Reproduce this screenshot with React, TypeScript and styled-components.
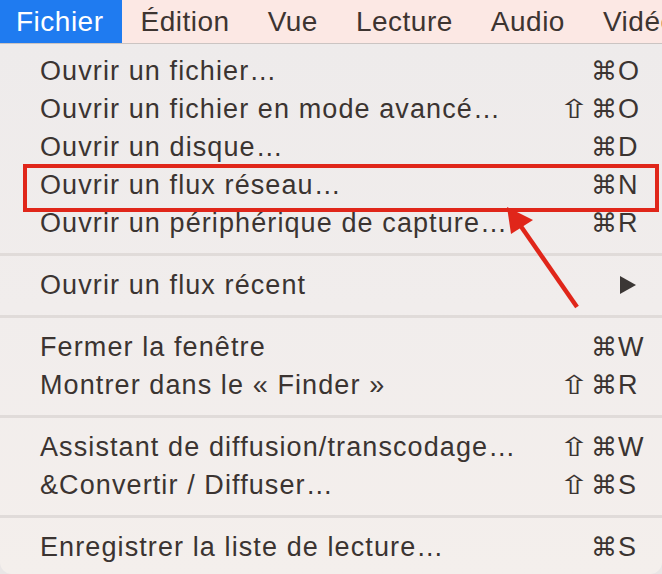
import React from "react";
import styled, { createGlobalStyle, css } from "styled-components";

const Global = createGlobalStyle`
  html, body { margin: 0; padding: 0; background: #e9e6e6; }
  body { width: 662px; height: 574px; overflow: hidden; }
  * { box-sizing: border-box; }
`;

const Screen = styled.div`
  position: relative;
  width: 662px;
  height: 574px;
  overflow: hidden;
  font-family: "Liberation Sans", Arial, sans-serif;
  color: #3b3431;
`;

const MenuBar = styled.div`
  display: flex;
  height: 44px;
  background: #fce8e4;
  border-bottom: 1px solid #cbc4c2;
  white-space: nowrap;
  overflow: hidden;
`;

const MenuTitle = styled.div<{ $active?: boolean; $first?: boolean }>`
  display: flex;
  align-items: center;
  height: 43px;
  padding: 0 19px;
  font-size: 28px;
  letter-spacing: 0.5px;
  color: #3d3431;
  flex-shrink: 0;
  ${(p) => p.$first && css`padding-left: 16px; padding-right: 18px;`}
  ${(p) =>
    p.$active &&
    css`
      background: #1f7bf0;
      color: #ffffff;
    `}
`;

const Menu = styled.div`
  padding: 8px 0 0;
  height: 530px;
  background: linear-gradient(180deg, #eeebeb 0%, #f1edec 50%, #f4efec 100%);
  border-radius: 0 0 12px 12px;
`;

const Row = styled.div<{ $boxed?: boolean }>`
  position: relative;
  display: flex;
  align-items: center;
  height: 38px;
  padding: 0 0 0 40px;
  font-size: 27px;
  letter-spacing: 1.1px;
  white-space: nowrap;
  ${(p) =>
    p.$boxed &&
    css`
      &::after {
        content: "";
        position: absolute;
        left: 23px;
        top: -2px;
        width: 628px;
        height: 40px;
        border: 4px solid #e0261a;
      }
    `}
`;

const Label = styled.span`
  flex: 1;
`;

const Shortcut = styled.span`
  display: grid;
  grid-template-columns: 78px 26px;
  column-gap: 1px;
  margin-right: 18px;
  align-items: center;
  letter-spacing: 0;
`;

const Mods = styled.span`
  display: flex;
  justify-content: flex-end;
  align-items: center;
  gap: 6px;
  font-family: "DejaVu Sans", sans-serif;
  font-size: 26px;
`;

const Glyph = styled.span<{ $wide?: boolean }>`
  display: inline-block;
  line-height: 1;
  ${(p) =>
    p.$wide &&
    css`
      transform: scaleX(1.45);
      transform-origin: right center;
      margin-right: -5px;
    `}
`;

const Key = styled.span`
  text-align: left;
`;

const Separator = styled.div`
  height: 24px;
  display: flex;
  align-items: center;
  &::before {
    content: "";
    display: block;
    width: 100%;
    height: 3px;
    background: #e0dbd9;
  }
`;

const SubArrow = styled.svg`
  margin-right: 26px;
  width: 16px;
  height: 18px;
`;

const Annotation = styled.svg`
  position: absolute;
  left: 0;
  top: 0;
  width: 662px;
  height: 574px;
  pointer-events: none;
`;

type Item =
  | { kind: "item"; label: string; shift?: boolean; key?: string; boxed?: boolean; submenu?: boolean }
  | { kind: "sep" };

const items: Item[] = [
  { kind: "item", label: "Ouvrir un fichier…", key: "O" },
  { kind: "item", label: "Ouvrir un fichier en mode avancé…", shift: true, key: "O" },
  { kind: "item", label: "Ouvrir un disque…", key: "D" },
  { kind: "item", label: "Ouvrir un flux réseau…", key: "N", boxed: true },
  { kind: "item", label: "Ouvrir un périphérique de capture…", key: "R" },
  { kind: "sep" },
  { kind: "item", label: "Ouvrir un flux récent", submenu: true },
  { kind: "sep" },
  { kind: "item", label: "Fermer la fenêtre", key: "W" },
  { kind: "item", label: "Montrer dans le « Finder »", shift: true, key: "R" },
  { kind: "sep" },
  { kind: "item", label: "Assistant de diffusion/transcodage…", shift: true, key: "W" },
  { kind: "item", label: "&Convertir / Diffuser…", shift: true, key: "S" },
  { kind: "sep" },
  { kind: "item", label: "Enregistrer la liste de lecture…", key: "S" },
];

const titles = ["Fichier", "Édition", "Vue", "Lecture", "Audio", "Vidéo"];

export default function App() {
  return (
    <Screen>
      <Global />
      <MenuBar>
        {titles.map((t, i) => (
          <MenuTitle key={t} $active={i === 0} $first={i === 0}>
            {t}
          </MenuTitle>
        ))}
      </MenuBar>
      <Menu>
        {items.map((it, i) =>
          it.kind === "sep" ? (
            <Separator key={i} />
          ) : (
            <Row key={i} $boxed={it.boxed}>
              <Label>{it.label}</Label>
              {it.submenu ? (
                <SubArrow viewBox="0 0 16 18">
                  <path d="M0 0 L16 9 L0 18 Z" fill="#3b3735" />
                </SubArrow>
              ) : (
                <Shortcut>
                  <Mods>
                    {it.shift && <Glyph $wide>⇧</Glyph>}
                    <Glyph>⌘</Glyph>
                  </Mods>
                  <Key>{it.key}</Key>
                </Shortcut>
              )}
            </Row>
          )
        )}
      </Menu>
      <Annotation viewBox="0 0 662 574">
        <line x1="577" y1="307" x2="520" y2="225" stroke="#e0261a" strokeWidth="4.5" />
        <path d="M507 207 L533 220 L511 234 Z" fill="#e0261a" />
      </Annotation>
    </Screen>
  );
}
